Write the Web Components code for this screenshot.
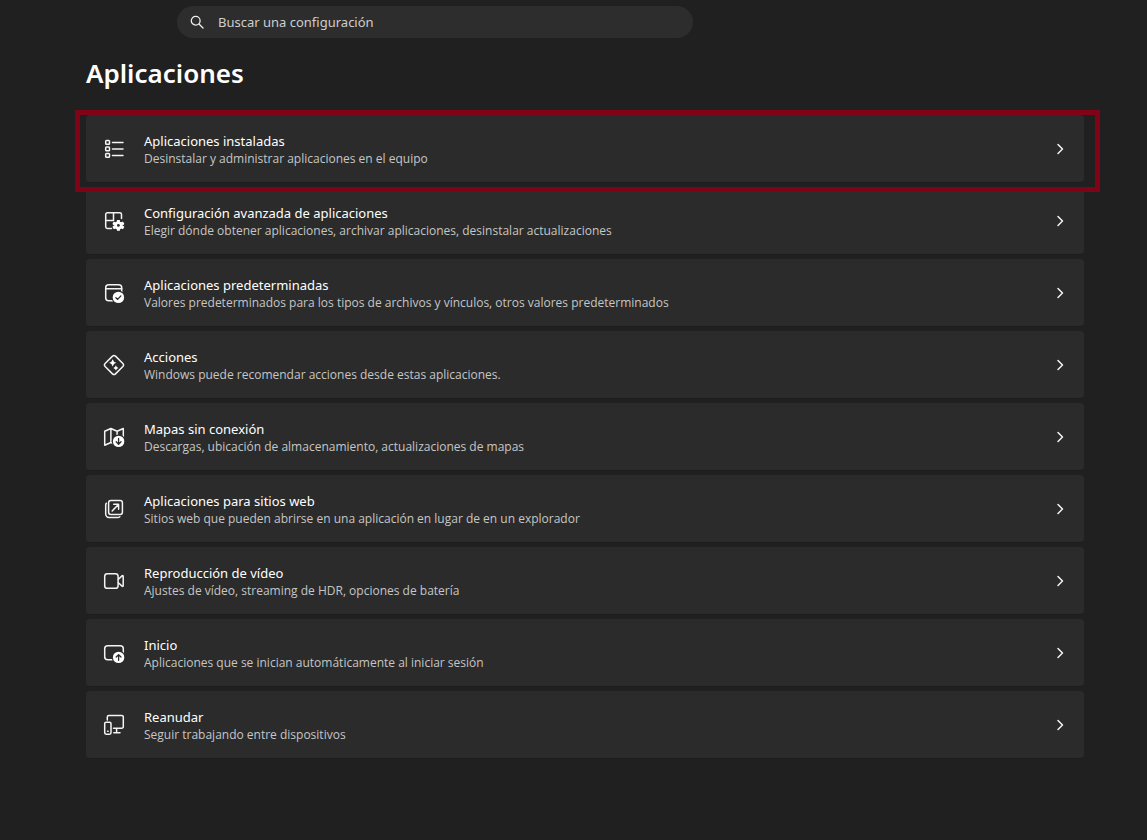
<!DOCTYPE html>
<html lang="es">
<head>
<meta charset="utf-8">
<meta name="viewport" content="width=device-width, initial-scale=1">
<title>Configuración - Aplicaciones</title>
<style>
  body { margin: 0; background: #202020; color: #fff; font-family: "Segoe UI", "Noto Sans", "Open Sans", sans-serif; }
</style>
</head>
<body>
<settings-page heading="Aplicaciones">
  <search-box slot="search" label="Buscar una configuración"></search-box>
  <settings-row icon="list" marked><span slot="title">Aplicaciones instaladas</span>Desinstalar y administrar aplicaciones en el equipo</settings-row>
  <settings-row icon="advanced"><span slot="title">Configuración avanzada de aplicaciones</span>Elegir dónde obtener aplicaciones, archivar aplicaciones, desinstalar actualizaciones</settings-row>
  <settings-row icon="defaults"><span slot="title">Aplicaciones predeterminadas</span>Valores predeterminados para los tipos de archivos y vínculos, otros valores predeterminados</settings-row>
  <settings-row icon="actions"><span slot="title">Acciones</span>Windows puede recomendar acciones desde estas aplicaciones.</settings-row>
  <settings-row icon="maps"><span slot="title">Mapas sin conexión</span>Descargas, ubicación de almacenamiento, actualizaciones de mapas</settings-row>
  <settings-row icon="sites"><span slot="title">Aplicaciones para sitios web</span>Sitios web que pueden abrirse en una aplicación en lugar de en un explorador</settings-row>
  <settings-row icon="video"><span slot="title">Reproducción de vídeo</span>Ajustes de vídeo, streaming de HDR, opciones de batería</settings-row>
  <settings-row icon="startup"><span slot="title">Inicio</span>Aplicaciones que se inician automáticamente al iniciar sesión</settings-row>
  <settings-row icon="resume"><span slot="title">Reanudar</span>Seguir trabajando entre dispositivos</settings-row>
</settings-page>

<template id="page-template">
  <style>
    :host { display: block; padding: 6px 63px 24px 86px; }
    header { padding-left: 91px; }
    h1 { margin: 15px 0 22px; font-size: 26px; line-height: 40px; font-weight: 600; }
    main { display: flex; flex-direction: column; gap: 4px; }
  </style>
  <header><slot name="search"></slot></header>
  <h1></h1>
  <main><slot></slot></main>
</template>

<template id="search-template">
  <style>
    :host { display: block; max-width: 516px; }
    label { display: flex; align-items: center; gap: 13px; height: 32px; padding: 0 13px; border-radius: 16px; background: #2d2d2d; box-sizing: border-box; }
    svg { flex: none; width: 15px; height: 15px; }
    input { flex: 1; min-width: 0; padding: 0; border: 0; outline: 0; background: none; color: #fff; font: inherit; font-size: 13px; line-height: 20px; }
    input::placeholder { color: #cecece; opacity: 1; }
  </style>
  <label>
    <svg viewBox="0 0 15 15" fill="none" stroke="#eee" stroke-width="1.3" stroke-linecap="round" aria-hidden="true"><circle cx="5.7" cy="5.7" r="4.4"/><path d="M9 9 13 13"/></svg>
    <input type="search">
  </label>
</template>

<template id="row-template">
  <style>
    :host { display: block; position: relative; }
    a { display: flex; align-items: center; gap: 19px; min-height: 68px; padding: 0 17px; box-sizing: border-box; border: 1px solid #1d1d1d; border-width: 0 0 1px; border-radius: 4px; background: #2b2b2b; color: inherit; text-decoration: none; }
    svg { flex: none; fill: none; stroke: #f4f4f4; stroke-width: 1.5; stroke-linecap: round; stroke-linejoin: round; }
    .icon { width: 22px; height: 22px; }
    .arrow { width: 14px; height: 14px; }
    .text { flex: 1; min-width: 0; }
    .title { display: block; font-size: 13px; line-height: 20px; }
    .description { display: block; font-family: "Segoe UI", "Open Sans", sans-serif; font-size: 12px; line-height: 16px; color: #c6c6c6; }
    :host([marked])::after { content: ""; position: absolute; z-index: 1; inset: -5px -16px -9px -11px; border: 5px solid #800318; pointer-events: none; }
    .solid { fill: #fff; stroke: none; }
    .ink { stroke: #2b2b2b; stroke-width: 1.3; }
    .gap { fill: #2b2b2b; stroke: none; }
  </style>
  <a href="#">
    <svg class="icon" viewBox="0 0 22 22" aria-hidden="true"></svg>
    <span class="text">
      <span class="title"><slot name="title"></slot></span>
      <span class="description"><slot></slot></span>
    </span>
    <svg class="arrow" viewBox="0 0 14 14" aria-hidden="true"><path d="M5 2.5 9.5 7 5 11.5"/></svg>
  </a>
</template>

<script>
  const icons = {
    list: '<rect x="2.7" y="2.5" width="3.8" height="3.8" rx=".8"/><rect x="2.7" y="9" width="3.8" height="3.8" rx=".8"/><rect x="2.7" y="15.5" width="3.8" height="3.8" rx=".8"/><path d="M9.5 4.4H20M9.5 10.9H20M9.5 17.4H20"/>',
    advanced: '<path d="M8.5 18.5H4.4A1.7 1.7 0 0 1 2.7 16.8V4.4A1.7 1.7 0 0 1 4.4 2.7H16.8A1.7 1.7 0 0 1 18.5 4.4V8.5M10.5 2.7V10.5M2.7 10.5H10.5"/><g class="solid"><circle cx="15.4" cy="15.4" r="4"/><path d="M14 10h2.8l.5 3h-3.8zM14 20.8h2.8l.5-3h-3.8zM20 11.6l1.4 2.4-2.3 1.9-1.9-3.2zM10.8 11.6 9.4 14l2.3 1.9 1.9-3.2zM20 19.2l1.4-2.4-2.3-1.9-1.9 3.2zM10.8 19.2 9.4 16.8l2.3-1.9 1.9 3.2z"/></g><circle class="gap" cx="15.4" cy="15.4" r="1.4"/>',
    defaults: '<rect x="2.7" y="2.7" width="16" height="16" rx="3"/><path d="M2.7 6.7H18.7"/><circle class="gap" cx="15.4" cy="15.4" r="6.8"/><circle class="solid" cx="15.4" cy="15.4" r="5.7"/><path class="ink" d="m12.9 15.7 1.7 1.7 3.3-3.5"/>',
    actions: '<path d="M9.5 2.1Q11 .8 12.5 2.1L19.9 9.5Q21.2 11 19.9 12.5L12.5 19.9Q11 21.2 9.5 19.9L2.1 12.5Q.8 11 2.1 9.5Z"/><path class="solid" d="M9.7 5.2Q10.4 8.1 13.3 8.8 10.4 9.5 9.7 12.4 9 9.5 6.1 8.8 9 8.1 9.7 5.2ZM12.9 11.3Q13.4 13.4 15.5 13.9 13.4 14.4 12.9 16.5 12.4 14.4 10.3 13.9 12.4 13.4 12.9 11.3Z"/>',
    maps: '<path d="M1.7 5.3 7.9 2.5 14.1 5.3 20.3 2.5V16.5L14.1 19.3 7.9 16.5 1.7 19.3ZM7.9 2.5V16.5M14.1 5.3V17"/><circle class="gap" cx="15.6" cy="15.4" r="6.8"/><circle class="solid" cx="15.6" cy="15.4" r="5.7"/><path class="ink" d="M15.6 12.5V18M13.2 15.8 15.6 18.2 18 15.8"/>',
    sites: '<rect x="5.6" y="2.6" width="13.8" height="13.8" rx="2.2"/><path d="M3.3 5.2Q2.7 6 2.7 7.2V16A3.4 3.4 0 0 0 6.1 19.4H14.8Q16 19.4 16.8 18.7M9.2 12.9 15.4 6.5M10.7 6.3H15.6V11.2"/>',
    video: '<rect x="1.7" y="3.7" width="13.4" height="14.6" rx="2.6"/><path d="M15.4 9.3 19 5.9Q20.2 5 20.2 6.5V15.5Q20.2 17 19 16.1L15.4 12.7"/>',
    startup: '<rect x="1.7" y="3.7" width="18.6" height="14" rx="3"/><circle class="gap" cx="15.6" cy="15.4" r="6.8"/><circle class="solid" cx="15.6" cy="15.4" r="5.7"/><path class="ink" d="M15.6 18.3V12.8M13.2 15 15.6 12.6 18 15"/>',
    resume: '<path d="M4.3 6V3A1.6 1.6 0 0 1 5.9 1.4H18.7A1.6 1.6 0 0 1 20.3 3V12.7A1.6 1.6 0 0 1 18.7 14.3H10.5M13.6 14.5V18.6M10.8 18.7H17"/><rect x="1.7" y="8.2" width="6.3" height="12" rx="1.4"/><path d="M4.6 17.2H5.1"/>'
  };

  function fill(element, id) {
    const root = element.attachShadow({ mode: "open" });
    root.append(document.getElementById(id).content.cloneNode(true));
    return root;
  }

  customElements.define("settings-page", class extends HTMLElement {
    connectedCallback() {
      if (this.shadowRoot) return;
      fill(this, "page-template").querySelector("h1").textContent = this.getAttribute("heading");
    }
  });

  customElements.define("search-box", class extends HTMLElement {
    connectedCallback() {
      if (this.shadowRoot) return;
      const input = fill(this, "search-template").querySelector("input");
      input.placeholder = this.getAttribute("label");
      input.setAttribute("aria-label", this.getAttribute("label"));
    }
  });

  customElements.define("settings-row", class extends HTMLElement {
    connectedCallback() {
      if (this.shadowRoot) return;
      fill(this, "row-template").querySelector(".icon").innerHTML = icons[this.getAttribute("icon")];
    }
  });
</script>
</body>
</html>
